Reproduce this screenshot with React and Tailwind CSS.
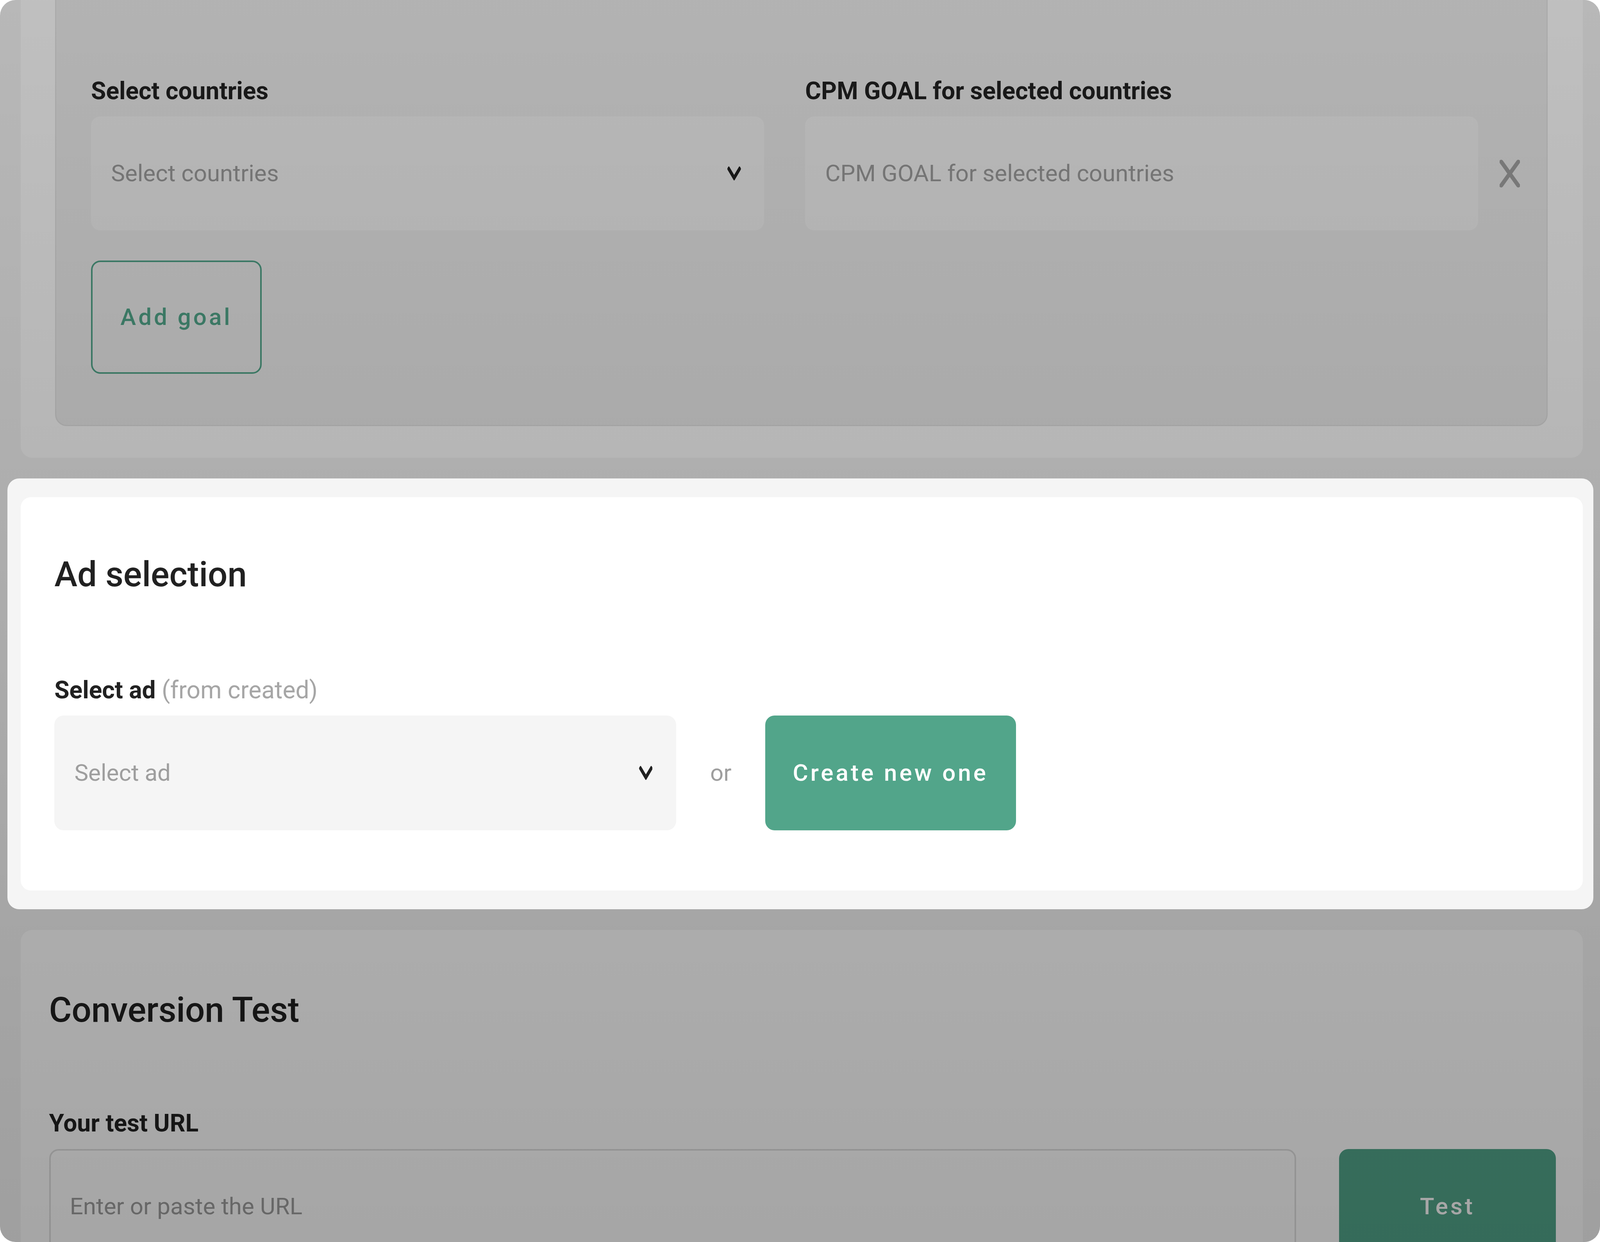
import React from 'react';

// Font Awesome style chevron, stretched to the box it is given
const Chevron = () => (
  <svg className="h-[36px] w-[0.85vw] shrink-0 text-[#212121]" viewBox="5 123 438 266" preserveAspectRatio="none" fill="currentColor">
    <path d="M207.029 381.476L12.686 187.132c-9.373-9.373-9.373-24.569 0-33.941l22.667-22.667c9.357-9.357 24.522-9.375 33.901-.04L224 284.505l154.745-154.021c9.379-9.335 24.544-9.317 33.901.04l22.667 22.667c9.373 9.373 9.373 24.569 0 33.941L240.971 381.476c-9.373 9.372-24.569 9.372-33.942 0z" />
  </svg>
);

const CloseIcon = () => (
  <svg className="h-[73px] w-[1.267vw]" viewBox="0 0 76 73" preserveAspectRatio="none" fill="none">
    <path d="M6 6 L70 67 M70 6 L6 67" stroke="#a3a3a3" strokeWidth="10" strokeLinecap="round" vectorEffect="non-scaling-stroke" />
  </svg>
);

const Label = ({ children, className = 'mb-[14px]' }) => (
  <p className={`${className} text-[1.52vw] leading-[103px] font-bold text-[#212121]`}>{children}</p>
);

const App = () => {
  return (
    <div className="h-screen w-full bg-white font-['Roboto',sans-serif]">
      <div className="relative h-full overflow-hidden rounded-[40px] bg-[#f5f5f5]">
        <div className="-mt-[100px] flex flex-col gap-[101px] pl-[1.283vw] pr-[1.067vw]">
          {/* Goals */}
          <div className="rounded-[30px] bg-white pt-[40px] pb-[81px] pl-[2.167vw] pr-[2.217vw]">
            <div className="rounded-[30px] border-[3px] border-[#e4e4e4] bg-[#eeeeee] pt-[238px] pb-[131px] pl-[2.167vw] pr-[1.65vw]">
              <div className="flex items-end">
                <div className="flex-1">
                  <Label>Select countries</Label>
                  <div className="flex h-[292px] items-center justify-between rounded-[24px] bg-[#f5f5f5] pl-[1.25vw] pr-[1.433vw]">
                    <span className="text-[1.467vw] text-[#9e9e9e]">Select countries</span>
                    <Chevron />
                  </div>
                </div>
                <div className="ml-[2.583vw] flex-1">
                  <Label>CPM GOAL for selected countries</Label>
                  <div className="flex h-[292px] items-center rounded-[24px] bg-[#f5f5f5] pl-[1.25vw]">
                    <span className="text-[1.467vw] text-[#9e9e9e]">CPM GOAL for selected countries</span>
                  </div>
                </div>
                <div className="ml-[1.35vw] flex h-[292px] items-center">
                  <CloseIcon />
                </div>
              </div>
              <button className="mt-[77px] h-[290px] w-[10.667vw] rounded-[24px] border-[4px] border-[#52a58a] text-[1.467vw] font-medium tracking-[0.1em] text-[#52a58a]">
                Add goal
              </button>
            </div>
          </div>

          {/* Ad selection, lifted above the tour overlay */}
          <div className="relative z-20 -my-[48px] -ml-[0.817vw] -mr-[0.65vw] rounded-[30px] bg-[#f5f5f5] py-[48px] pl-[0.817vw] pr-[0.65vw]">
            <div className="rounded-[26px] bg-white pt-[122px] pb-[154px] pl-[2.117vw]">
              <h2 className="text-[2.167vw] leading-[152px] font-medium text-[#212121]">Ad selection</h2>
              <div className="mt-[168px]">
                <Label>
                  Select ad <span className="font-normal text-[#a6a6a6]">(from created)</span>
                </Label>
                <div className="flex items-center">
                  <div className="flex h-[294px] w-[38.85vw] items-center justify-between rounded-[24px] bg-[#f5f5f5] pl-[1.25vw] pr-[1.467vw]">
                    <span className="text-[1.467vw] text-[#9e9e9e]">Select ad</span>
                    <Chevron />
                  </div>
                  <span className="ml-[2.133vw] mr-[2.1vw] text-[1.467vw] text-[#9e9e9e]">or</span>
                  <button className="h-[294px] w-[15.683vw] rounded-[24px] bg-[#52a58a] text-[1.467vw] font-medium tracking-[0.1em] text-white">
                    Create new one
                  </button>
                </div>
              </div>
            </div>
          </div>

          {/* Conversion test */}
          <div className="h-[1200px] rounded-[30px] bg-white pt-[129px] pl-[1.783vw] pr-[1.7vw]">
            <h2 className="text-[2.167vw] leading-[152px] font-medium text-[#212121]">Conversion Test</h2>
            <div className="mt-[162px]">
              <Label className="mb-[15px]">Your test URL</Label>
              <div className="flex items-center gap-[2.683vw]">
                <div className="flex h-[294px] flex-1 items-center rounded-[24px] border-[4px] border-[#e0e0e0] pl-[1.2vw]">
                  <span className="text-[1.467vw] text-[#9e9e9e]">Enter or paste the URL</span>
                </div>
                <button className="h-[294px] w-[13.533vw] rounded-[24px] bg-[#52a58a] text-[1.467vw] font-medium tracking-[0.1em] text-white">
                  Test
                </button>
              </div>
            </div>
          </div>
        </div>

        {/* Tour overlay */}
        <div className="pointer-events-none absolute inset-0 z-10 bg-gradient-to-b from-black/25 to-black/35" />
      </div>
    </div>
  );
};

export default App;
